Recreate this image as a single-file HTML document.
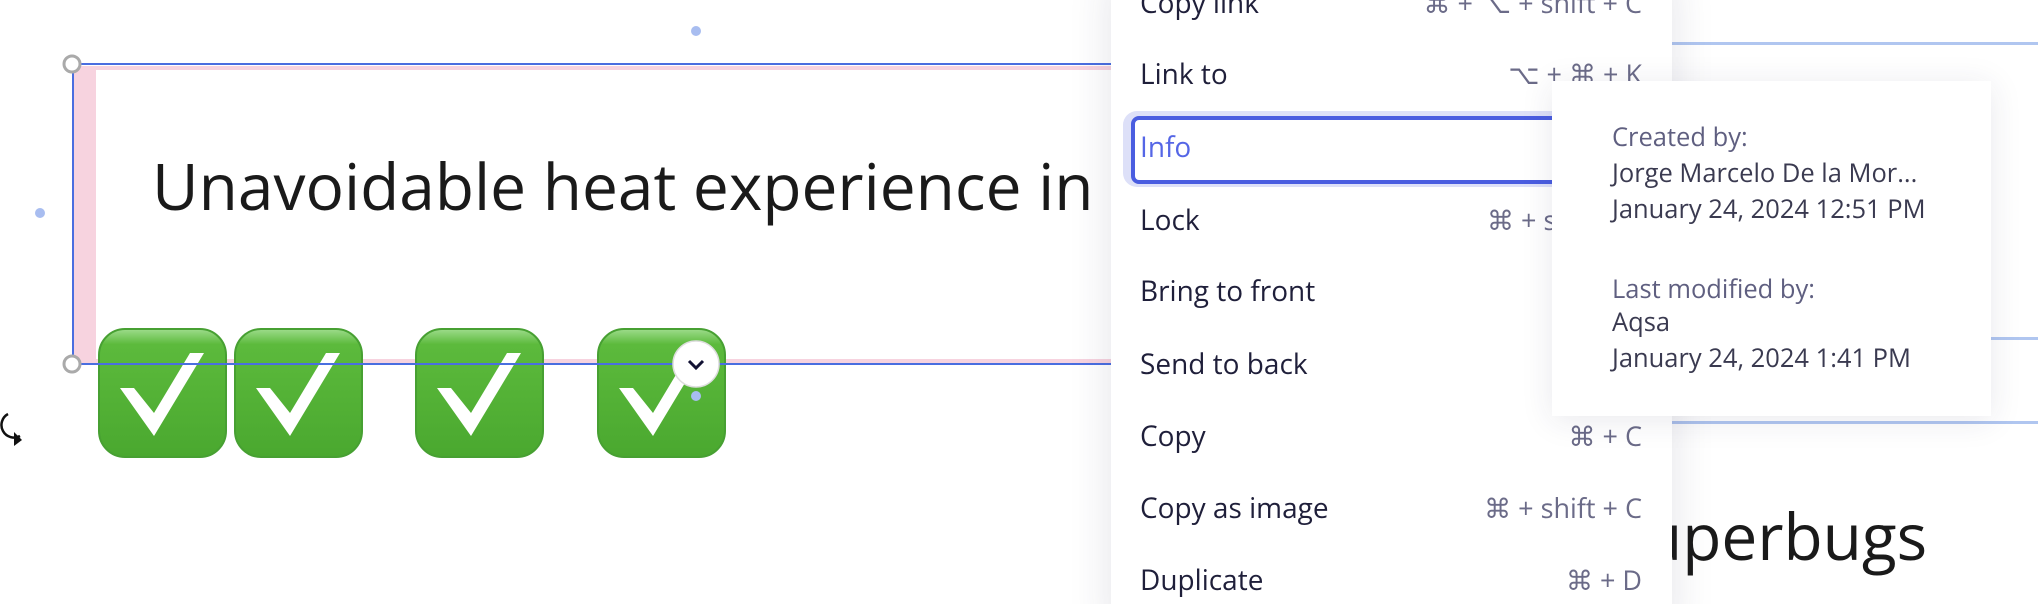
<!DOCTYPE html>
<html><head><meta charset="utf-8"><style>
html,body{margin:0;padding:0;width:2038px;height:604px;overflow:hidden;background:#fff;position:relative;font-family:"Open Sans","Liberation Sans",sans-serif}
.abs{position:absolute}
.menu{position:absolute;left:1111px;top:-30px;width:561px;height:660px;background:#fff;box-shadow:0 6px 40px rgba(40,40,80,0.13)}
.item{position:absolute;left:29px;font-size:28px;color:#1f1f3a;line-height:34px}
.sc{position:absolute;right:30px;font-size:27px;color:#6b6b88;line-height:34px}
.info{position:absolute;left:1552px;top:81px;width:439px;height:335px;background:#fff;box-shadow:0 4px 30px rgba(40,40,80,0.10)}
.il{position:absolute;left:60px;font-size:25.5px;line-height:30px;white-space:nowrap}
.lab{color:#5f5f80}.val{color:#3a3a50}
</style></head><body>
<div class="abs" style="left:1672px;top:42px;width:366px;height:3px;background:#b0c6f0"></div>
<div class="abs" style="left:1672px;top:337px;width:366px;height:3px;background:#b0c6f0"></div>
<div class="abs" style="left:1672px;top:421px;width:366px;height:3px;background:#b0c6f0"></div>
<div class="abs" style="left:1946px;top:115px;font-size:66px;color:#1a1a1a;line-height:80px">n</div>
<div class="abs" style="left:1643px;top:496px;font-size:64px;color:#1a1a1a;line-height:80px">uperbugs</div>

<div class="abs" style="left:74px;top:66px;width:22px;height:296px;background:#f7d3df"></div>
<div class="abs" style="left:74px;top:66px;width:1040px;height:4px;background:#f7d3df"></div>
<div class="abs" style="left:74px;top:359px;width:1040px;height:4px;background:#f7d3df"></div>
<div class="abs" style="left:152px;top:146px;font-size:64px;color:#1a1a1a;line-height:80px;white-space:nowrap">Unavoidable heat experience in r</div>
<div class="abs" style="left:72px;top:63px;width:1040px;height:2px;background:#4a6ee0"></div>
<div class="abs" style="left:72px;top:63px;width:2px;height:302px;background:#4a6ee0"></div>

<svg class="abs" style="left:0;top:0" width="1111" height="604">
<defs><linearGradient id="g" x1="0" y1="0" x2="0" y2="1"><stop offset="0" stop-color="#9edc8c"/><stop offset="0.12" stop-color="#5cba3c"/><stop offset="1" stop-color="#4aa82f"/></linearGradient></defs>
<g id="c"><rect x="99" y="329" width="127" height="128" rx="26" fill="url(#g)" stroke="#47a032" stroke-width="2"/><polygon points="120,388 134,388 154,413 190,353 204,353 154,436" fill="#fff"/></g>
<use href="#c" x="136"/><use href="#c" x="317"/><use href="#c" x="499"/>
<line x1="72" y1="364" x2="1111" y2="364" stroke="#4a6ee0" stroke-width="2"/>
<circle cx="72" cy="64" r="8" fill="#fff" stroke="#aaa" stroke-width="3"/>
<circle cx="72" cy="364" r="8" fill="#fff" stroke="#aaa" stroke-width="3"/>
<circle cx="696" cy="31" r="5" fill="#a8bdf0"/>
<circle cx="40" cy="213" r="5" fill="#a8bdf0"/>
<circle cx="696" cy="364" r="23" fill="#fff" stroke="#ddd" stroke-width="1.5"/>
<path d="M689 361 L696 368 L703 361" fill="none" stroke="#111133" stroke-width="3"/>
<circle cx="696" cy="396" r="5" fill="#a8bdf0"/>
<path d="M20 436 A11 11 0 1 1 8 414" fill="none" stroke="#111" stroke-width="2.5"/>
<polygon points="14,432 22,440 14,446" fill="#111"/>
</svg>

<div class="menu">
<div class="item" style="top:16px">Copy link</div><div class="sc" style="top:16px">⌘ + ⌥ + shift + C</div>
<div class="item" style="top:87px">Link to</div><div class="sc" style="top:87px">⌥ + ⌘ + K</div>
<div class="abs" style="left:12px;top:141px;width:560px;height:76px;background:#dde0f8;border-radius:14px"></div>
<div class="abs" style="left:20px;top:146px;width:560px;height:60px;border:4px solid #4a5de0;border-radius:8px;background:#fff"></div>
<div class="item" style="top:160px;color:#5566e6">Info</div>
<div class="item" style="top:233px">Lock</div><div class="sc" style="top:233px">⌘ + shift + L</div>
<div class="item" style="top:304px">Bring to front</div><div class="sc" style="top:304px">fn + ↑</div>
<div class="item" style="top:377px">Send to back</div><div class="sc" style="top:377px">fn + ↓</div>
<div class="item" style="top:449px">Copy</div><div class="sc" style="top:449px">⌘ + C</div>
<div class="item" style="top:521px">Copy as image</div><div class="sc" style="top:521px">⌘ + shift + C</div>
<div class="item" style="top:593px">Duplicate</div><div class="sc" style="top:593px">⌘ + D</div>
</div>

<div class="info">
<div class="il lab" style="top:41px">Created by:</div>
<div class="il val" style="top:77px">Jorge Marcelo De la Mor...</div>
<div class="il val" style="top:113px">January 24, 2024 12:51 PM</div>
<div class="il lab" style="top:193px">Last modified by:</div>
<div class="il val" style="top:226px">Aqsa</div>
<div class="il val" style="top:262px">January 24, 2024 1:41 PM</div>
</div>
</body></html>
